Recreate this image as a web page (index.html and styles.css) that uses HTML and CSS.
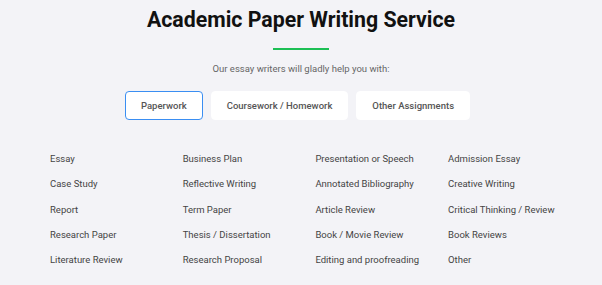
FILE: index.html
```html
<!DOCTYPE html>
<html>
<head>
  <meta charset="UTF-8">
  <link rel="stylesheet" href="styles.css">
</head>
<body>
  <section class="services">
    <h2 class="services-title">Academic Paper Writing Service</h2>
    <div class="title-line"></div>
    <p class="services-sub">Our essay writers will gladly help you with:</p>

    <!-- Tabs -->
    <div class="tabs">
      <button class="tab active">Paperwork</button>
      <button class="tab">Coursework / Homework</button>
      <button class="tab">Other Assignments</button>
    </div>

    <!-- Paper types -->
    <ul class="type-list">
      <li>Essay</li>
      <li>Business Plan</li>
      <li>Presentation or Speech</li>
      <li>Admission Essay</li>
      <li>Case Study</li>
      <li>Reflective Writing</li>
      <li>Annotated Bibliography</li>
      <li>Creative Writing</li>
      <li>Report</li>
      <li>Term Paper</li>
      <li>Article Review</li>
      <li>Critical Thinking / Review</li>
      <li>Research Paper</li>
      <li>Thesis / Dissertation</li>
      <li>Book / Movie Review</li>
      <li>Book Reviews</li>
      <li>Literature Review</li>
      <li>Research Proposal</li>
      <li>Editing and proofreading</li>
      <li>Other</li>
    </ul>
  </section>
</body>
</html>
```

FILE: styles.css
```css
html, body {
  margin: 0;
  padding: 0;
  background: #f3f3f7;
}
body {
  width: 602px;
  height: 285px;
  overflow: hidden;
  font-family: Roboto, "Liberation Sans", sans-serif;
  color: #444;
}
.services {
  display: flex;
  flex-direction: column;
  align-items: center;
  padding-top: 8px;
}
.services-title {
  margin: 0;
  font-size: 21.3px;
  font-weight: 700;
  line-height: 24px;
  color: #111;
}
.title-line {
  width: 56px;
  height: 2px;
  margin-top: 16px;
  background: #1dbf55;
}
.services-sub {
  margin: 13px 0 0;
  font-size: 9.5px;
  line-height: 12px;
  color: #666;
}
.tabs {
  display: flex;
  gap: 8px;
  margin: 16px 7px 0 0;
}
.tab {
  height: 29px;
  padding: 0 15px;
  background: #fff;
  border: 1.5px solid #fff;
  border-radius: 4px;
  font-family: inherit;
  font-size: 9.5px;
  font-weight: 500;
  color: #555;
  cursor: pointer;
}
.tab.active {
  border-color: #3a8ef2;
}
.type-list {
  list-style: none;
  align-self: stretch;
  display: grid;
  grid-template-columns: repeat(4, 132.7px);
  grid-auto-rows: 25.25px;
  margin: 26px 0 0 50px;
  padding: 0;
  font-size: 9.5px;
  line-height: 25px;
  color: #444;
}
```
